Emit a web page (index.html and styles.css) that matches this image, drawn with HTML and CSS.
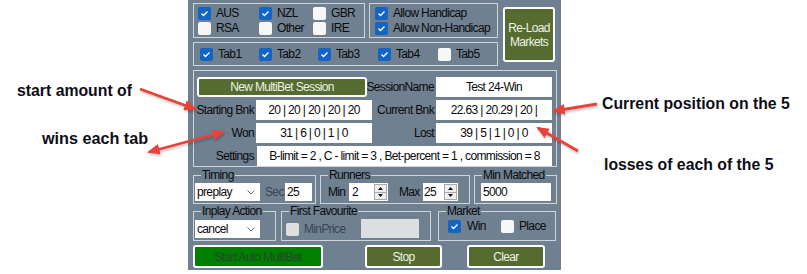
FILE: index.html
```html
<!DOCTYPE html>
<html>
<head>
<meta charset="utf-8">
<title>MultiBet</title>
<link rel="stylesheet" href="styles.css">
</head>
<body>
<div class="page">
  <div class="notes notes-left">
    <p class="note note-start">start amount of</p>
    <p class="note note-wins">wins each tab</p>
  </div>

  <div class="panel">
    <div class="top">
      <div class="top-left">
        <div class="top-row">
          <div class="box box-country">
            <div class="chk"><span class="cb cb-on"><svg viewBox="0 0 13 13"><polyline points="3.5,6.5 5.5,8.5 9.5,4.5"/></svg></span>AUS</div>
            <div class="chk"><span class="cb cb-on"><svg viewBox="0 0 13 13"><polyline points="3.5,6.5 5.5,8.5 9.5,4.5"/></svg></span>NZL</div>
            <div class="chk"><span class="cb"></span>GBR</div>
            <div class="chk"><span class="cb"></span>RSA</div>
            <div class="chk"><span class="cb"></span>Other</div>
            <div class="chk"><span class="cb"></span>IRE</div>
          </div>
          <div class="box box-allow">
            <div class="chk"><span class="cb cb-on"><svg viewBox="0 0 13 13"><polyline points="3.5,6.5 5.5,8.5 9.5,4.5"/></svg></span>Allow Handicap</div>
            <div class="chk"><span class="cb cb-on"><svg viewBox="0 0 13 13"><polyline points="3.5,6.5 5.5,8.5 9.5,4.5"/></svg></span>Allow Non-Handicap</div>
          </div>
        </div>
        <div class="box box-tabs">
          <div class="chk"><span class="cb cb-on"><svg viewBox="0 0 13 13"><polyline points="3.5,6.5 5.5,8.5 9.5,4.5"/></svg></span>Tab1</div>
          <div class="chk"><span class="cb cb-on"><svg viewBox="0 0 13 13"><polyline points="3.5,6.5 5.5,8.5 9.5,4.5"/></svg></span>Tab2</div>
          <div class="chk"><span class="cb cb-on"><svg viewBox="0 0 13 13"><polyline points="3.5,6.5 5.5,8.5 9.5,4.5"/></svg></span>Tab3</div>
          <div class="chk"><span class="cb cb-on"><svg viewBox="0 0 13 13"><polyline points="3.5,6.5 5.5,8.5 9.5,4.5"/></svg></span>Tab4</div>
          <div class="chk"><span class="cb"></span>Tab5</div>
        </div>
      </div>
      <button class="btn btn-reload">Re-Load<br>Markets</button>
    </div>

    <div class="box box-session">
      <button class="btn btn-session">New MultiBet Session</button>
      <div class="lbl">SessionName</div>
      <div class="tb">Test 24-Win</div>

      <div class="lbl">Starting Bnk</div>
      <div class="tb">20 | 20 | 20 | 20 | 20</div>
      <div class="lbl">Current Bnk</div>
      <div class="tb">22.63 | 20.29 | 20 |</div>

      <div class="lbl">Won</div>
      <div class="tb">31 | 6 | 0 | 1 | 0</div>
      <div class="lbl">Lost</div>
      <div class="tb">39 | 5 | 1 | 0 | 0</div>

      <div class="lbl">Settings</div>
      <div class="tb tb-wide">B-limit = 2 , C - limit = 3 , Bet-percent = 1 , commission = 8</div>
    </div>

    <div class="grp-row grp-row1">
      <fieldset class="grp grp-timing">
        <legend>Timing</legend>
        <div class="grp-inner">
          <div class="combo"><span>preplay</span><svg class="chev" viewBox="0 0 8 5"><polyline points="0.5,0.5 4,4 7.5,0.5"/></svg></div>
          <span class="fl fl-sec dim">Sec</span>
          <div class="in in-sec">25</div>
        </div>
      </fieldset>
      <fieldset class="grp grp-runners">
        <legend>Runners</legend>
        <div class="grp-inner">
          <span class="fl fl-min">Min</span>
          <div class="num num-min"><span>2</span><span class="spin"><span class="sp sp-up"><svg viewBox="0 0 7 4"><polygon points="0,4 3.5,0 7,4"/></svg></span><span class="sp sp-dn"><svg viewBox="0 0 7 4"><polygon points="0,0 7,0 3.5,4"/></svg></span></span></div>
          <span class="fl fl-max">Max</span>
          <div class="num num-max"><span>25</span><span class="spin"><span class="sp sp-up"><svg viewBox="0 0 7 4"><polygon points="0,4 3.5,0 7,4"/></svg></span><span class="sp sp-dn"><svg viewBox="0 0 7 4"><polygon points="0,0 7,0 3.5,4"/></svg></span></span></div>
        </div>
      </fieldset>
      <fieldset class="grp grp-matched">
        <legend>Min Matched</legend>
        <div class="grp-inner">
          <div class="in in-matched">5000</div>
        </div>
      </fieldset>
    </div>

    <div class="grp-row grp-row2">
      <fieldset class="grp grp-inplay">
        <legend>Inplay Action</legend>
        <div class="grp-inner">
          <div class="combo"><span>cancel</span><svg class="chev" viewBox="0 0 8 5"><polyline points="0.5,0.5 4,4 7.5,0.5"/></svg></div>
        </div>
      </fieldset>
      <fieldset class="grp grp-fav">
        <legend>First Favourite</legend>
        <div class="grp-inner">
          <div class="chk chk-minprice dim"><span class="cb cb-dis"></span>MinPrice</div>
          <div class="in in-dis"></div>
        </div>
      </fieldset>
      <fieldset class="grp grp-market">
        <legend>Market</legend>
        <div class="grp-inner">
          <div class="chk chk-win"><span class="cb cb-on"><svg viewBox="0 0 13 13"><polyline points="3.5,6.5 5.5,8.5 9.5,4.5"/></svg></span>Win</div>
          <div class="chk"><span class="cb"></span>Place</div>
        </div>
      </fieldset>
    </div>

    <div class="actions">
      <button class="btn btn-start">Start Auto MultiBet</button>
      <button class="btn btn-stop">Stop</button>
      <button class="btn btn-clear">Clear</button>
    </div>
  </div>

  <div class="notes notes-right">
    <p class="note note-current">Current position on the 5</p>
    <p class="note note-losses">losses of each of the 5</p>
  </div>

  <svg class="arrows" width="807" height="274" viewBox="0 0 807 274">
    <defs>
      <marker id="ah" viewBox="0 0 12 10" refX="10" refY="5" markerWidth="4.6" markerHeight="3.8" orient="auto-start-reverse">
        <path d="M0,0 L12,5 L0,10 z" class="ah-fill"/>
      </marker>
    </defs>
    <line x1="140" y1="89" x2="195" y2="109" class="arrow" marker-end="url(#ah)"/>
    <line x1="149" y1="152" x2="223" y2="132" class="arrow" marker-start="url(#ah)" marker-end="url(#ah)"/>
    <line x1="597" y1="104" x2="554" y2="111" class="arrow" marker-end="url(#ah)"/>
    <line x1="578" y1="151" x2="538" y2="128" class="arrow" marker-end="url(#ah)"/>
  </svg>
</div>
</body>
</html>
```

FILE: styles.css
```css
* { box-sizing: border-box; }

html, body {
  margin: 0;
  padding: 0;
  background: #ffffff;
}

.page {
  position: relative;
  width: 807px;
  height: 274px;
  display: flex;
  overflow: hidden;
  background: #ffffff;
}

/* annotations */
.notes {
  font-family: "Liberation Sans", Arial, sans-serif;
  font-weight: bold;
  font-size: 15.8px;
  line-height: 18px;
  color: #0d0d16;
}
.note { margin: 0; white-space: nowrap; }
.notes-left { width: 188px; flex: none; padding-top: 82px; }
.note-start { margin-left: 17px; }
.note-wins { margin-left: 42px; margin-top: 29px; font-size: 16.2px; }
.notes-right { flex: 1; padding-top: 95px; }
.note-current { margin-left: 41px; }
.note-losses { margin-left: 43px; margin-top: 43px; }

/* panel */
.panel {
  width: 373px;
  height: 270px;
  flex: none;
  background: #6f8091;
  padding: 3px 0 0 5px;
  display: flex;
  flex-direction: column;
  font-family: "Liberation Sans", Arial, sans-serif;
  font-size: 12px;
  letter-spacing: -0.65px;
  color: #0a0a0a;
}

.top { display: flex; gap: 5px; }
.top-left { width: 305px; display: flex; flex-direction: column; gap: 4px; }
.top-row { display: flex; gap: 4px; }

.box { border: 1px solid #cfd5db; }

.box-country {
  width: 172px;
  height: 35px;
  padding: 3px 0 0 4px;
  display: grid;
  grid-template-columns: 61px 54px auto;
  row-gap: 2px;
  align-content: start;
}
.box-allow {
  width: 129px;
  height: 35px;
  padding: 3px 0 0 5px;
  display: grid;
  row-gap: 2px;
  align-content: start;
}
.box-tabs {
  width: 305px;
  height: 24px;
  padding-left: 6px;
  display: grid;
  grid-template-columns: 59px 59px 60px 60px auto;
  align-items: center;
}

.chk {
  display: flex;
  align-items: center;
  gap: 5px;
  height: 13px;
  line-height: 13px;
  white-space: nowrap;
}
.cb {
  width: 13px;
  height: 13px;
  flex: none;
  border-radius: 2px;
  background: #f7f7f7;
  display: block;
}
.cb svg { display: block; width: 13px; height: 13px; }
.cb svg polyline { fill: none; stroke: #ffffff; stroke-width: 1.3; }
.cb-on { background: #1464c4; }
.cb-dis { background: #dedfe0; }
.dim { color: #3a4551; }

/* buttons */
.btn {
  font: inherit;
  letter-spacing: inherit;
  border: 2px solid #ffffff;
  border-radius: 3px;
  background: #556b2f;
  color: #eef2e6;
  padding: 0;
  margin: 0;
  display: flex;
  align-items: center;
  justify-content: center;
  text-align: center;
  white-space: nowrap;
}
.btn-reload { width: 52px; height: 55px; margin-top: 4px; line-height: 14px; }

/* session box */
.box-session {
  width: 364px;
  height: 97px;
  margin-top: 4px;
  padding: 6px 0 0 3px;
  display: grid;
  grid-template-columns: 59px 116px 64px 116px;
  grid-auto-rows: 20px;
  row-gap: 3px;
}
.btn-session { grid-column: 1 / 3; width: 170px; height: 20px; }
.lbl {
  display: flex;
  align-items: center;
  justify-content: flex-end;
  padding-right: 2px;
  white-space: nowrap;
}
.tb {
  background: #ffffff;
  display: flex;
  align-items: center;
  justify-content: center;
  white-space: nowrap;
}
.tb-wide { grid-column: 2 / 5; margin-left: 1px; }

/* group boxes */
.grp-row { display: flex; }
.grp {
  margin: 0;
  padding: 0;
  min-width: 0;
  border: 1px solid #cfd5db;
}
.grp legend {
  padding: 0 1px;
  margin-left: 7px;
  height: 13px;
  line-height: 13px;
}
.grp-inner { display: flex; align-items: center; padding-top: 1px; }

.grp-row1 { margin-top: 2px; gap: 4px; }
.grp-row1 .grp { height: 35px; }
.grp-timing { width: 123px; }
.grp-timing .grp-inner { padding-left: 1px; }
.grp-runners { width: 150px; }
.grp-runners .grp-inner { padding-left: 7px; }
.grp-matched { width: 83px; }
.grp-matched .grp-inner { padding-left: 6px; }

.grp-row2 { margin-top: 1px; }
.grp-row2 .grp { height: 36px; }
.grp-row2 .grp-inner { padding-top: 2px; }
.grp-inplay { width: 83px; }
.grp-inplay .grp-inner { padding-left: 1px; }
.grp-fav { width: 150px; margin-left: 5px; }
.grp-fav .grp-inner { padding-left: 4px; }
.grp-market { width: 118px; margin-left: 7px; }
.grp-market .grp-inner { padding-left: 9px; }

.combo {
  width: 65px;
  height: 18px;
  background: #ffffff;
  display: flex;
  align-items: center;
  justify-content: space-between;
  padding: 0 5px 0 2px;
}
.chev { width: 8px; height: 5px; display: block; }
.chev polyline { fill: none; stroke: #6a6a6a; stroke-width: 1; }

.fl { display: block; white-space: nowrap; }
.fl-sec { width: 20px; margin-left: 5px; }
.fl-min { width: 21px; }
.fl-max { width: 24px; margin-left: 11px; }

.in {
  height: 18px;
  background: #ffffff;
  display: flex;
  align-items: center;
  padding-left: 2px;
  white-space: nowrap;
}
.in-sec { width: 27px; }
.in-matched { width: 70px; }
.in-dis { width: 58px; height: 19px; background: #dcdfe2; margin-top: -1px; }

.num {
  height: 18px;
  background: #ffffff;
  display: flex;
  align-items: center;
  justify-content: space-between;
  padding: 0 1px 0 3px;
}
.num-min { width: 39px; }
.num-max { width: 35px; padding-left: 1px; }
.spin { display: flex; flex-direction: column; width: 13px; height: 16px; }
.sp {
  flex: 1;
  display: flex;
  align-items: center;
  justify-content: center;
  background: #eeeeee;
  border: 1px solid #a9a9a9;
}
.sp-dn { border-top: none; }
.sp svg { width: 5px; height: 3px; display: block; }
.sp svg polygon { fill: #111111; }

.chk-minprice { width: 75px; }
.chk-win { width: 53px; gap: 6px; }

/* action buttons */
.actions { display: flex; margin-top: 4px; }
.actions .btn { height: 23px; }
.btn-start { width: 130px; background: #008000; color: #27452a; }
.btn-stop { width: 77px; margin-left: 42px; }
.btn-clear { width: 78px; margin-left: 25px; }

/* annotation arrows */
.arrows {
  position: absolute;
  left: 0;
  top: 0;
  pointer-events: none;
  filter: drop-shadow(1px 2px 1px rgba(0, 0, 0, 0.22));
}
.arrow { stroke: #e8433b; stroke-width: 2.8; }
.ah-fill { fill: #e8433b; }
```
